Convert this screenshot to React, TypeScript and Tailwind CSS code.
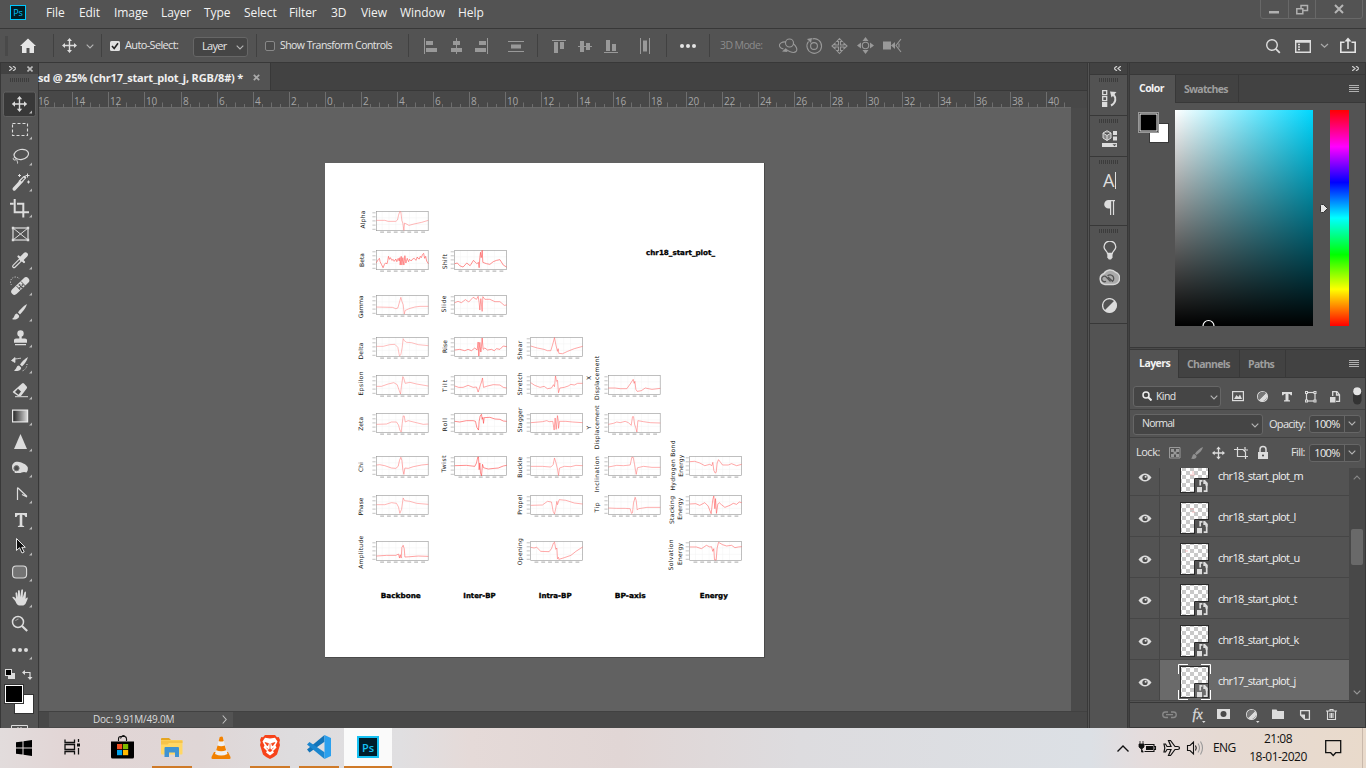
import React from "react";

/* ---------- plots on the document ---------- */

type Plot = { x: number; y: number; d: string; c?: string; w?: number };

const PLOTS: Plot[] = [
  { x: 376, y: 211.3, c: "#ff7d7d", d: "0,27 25,27 35,30 58,30 63,26 66,12 70,0 73,2 76,28 79,35 82,57 84,35 88,37 97,42 112,38 135,33 155,27" },
  { x: 376, y: 250.3, c: "#ff5050", w: 0.6, d: "0,37 3,32 6,27 9,24 11,34 15,42 20,52 24,42 27,38 32,40 34,30 36,18 39,27 42,22 46,30 50,27 53,33 58,26 61,34 65,24 68,32 70,22 71,44 74,18 76,44 79,22 82,44 85,16 88,38 92,24 96,34 99,27 104,32 108,26 113,24 118,30 122,20 124,24 128,26 131,18 134,22 138,12 141,9 144,24 147,18 150,32 155,40" },
  { x: 376, y: 295.3, c: "#ff7d7d", d: "0,35 48,36 58,40 64,38 69,20 73,6 76,18 80,28 83,56 86,45 100,39 115,35 130,33 155,33" },
  { x: 376, y: 337.3, c: "#ff8a8a", d: "0,27 20,27 40,22 55,21 64,30 69,56 73,52 77,30 80,4 83,10 90,15 105,16 125,22 155,25" },
  { x: 376, y: 375.3, c: "#ff7d7d", d: "0,33 15,33 35,26 52,22 62,28 68,45 72,56 75,30 79,4 82,10 86,24 100,21 120,26 155,32" },
  { x: 376, y: 413.3, c: "#ff7d7d", d: "0,33 30,32 45,26 60,26 66,35 70,50 74,56 77,30 80,8 83,8 86,26 95,22 115,27 140,33 155,32" },
  { x: 376, y: 456.3, c: "#ff6d6d", d: "0,26 10,25 25,28 45,35 58,36 65,30 69,12 73,3 76,12 79,40 82,54 85,35 95,36 110,31 135,26 155,24" },
  { x: 376, y: 495.3, c: "#ff7d7d", d: "0,28 25,28 45,22 60,24 66,35 70,54 75,42 80,8 84,16 100,18 120,24 155,27" },
  { x: 376, y: 541.3, c: "#ff5a5a", d: "0,44 30,42 58,42 66,38 69,50 71,40 74,50 76,18 80,12 83,22 85,47 100,46 125,44 155,45" },
  { x: 454.3, y: 250.3, c: "#f55", w: 0.65, d: "0,40 8,38 15,46 25,50 36,38 46,46 56,30 66,40 71,36 73,52 75,22 77,6 79,22 81,14 82,0 84,36 95,40 105,42 115,34 125,30 135,28 145,44 155,50" },
  { x: 454.3, y: 295.3, c: "#ff5a5a", d: "0,22 10,18 20,22 32,13 42,20 55,6 65,12 70,3 73,22 75,44 78,10 80,28 82,48 84,4 90,12 105,12 120,19 135,19 148,30 155,29" },
  { x: 454.3, y: 337.3, c: "#f44", d: "0,38 15,36 30,40 40,36 50,40 60,32 67,38 70,14 72,56 75,15 78,44 80,28 82,2 85,36 90,32 98,38 110,36 118,40 125,34 135,36 145,26 155,28" },
  { x: 454.3, y: 375.3, c: "#ff5a5a", d: "0,32 12,36 25,36 40,30 55,36 65,35 70,50 74,38 77,28 80,20 83,8 86,36 98,32 115,28 135,29 145,36 155,38" },
  { x: 454.3, y: 413.3, c: "#f44", w: 0.6, d: "0,24 15,26 35,22 55,22 62,24 66,42 71,50 73,24 76,8 80,3 82,18 84,12 86,30 88,13 105,12 120,17 135,18 145,23 155,24" },
  { x: 454.3, y: 456.3, c: "#f44", w: 0.6, d: "0,28 35,27 60,30 65,20 69,2 71,2 73,40 75,20 77,50 80,58 83,24 86,34 100,38 118,36 130,35 145,29 155,27" },
  { x: 530.3, y: 337.3, c: "#ff6060", d: "0,26 20,32 40,36 50,40 60,40 66,20 71,1 75,22 80,42 82,34 84,48 95,49 110,42 130,34 155,27" },
  { x: 530.3, y: 375.3, c: "#ff6060", d: "0,22 12,30 28,36 40,33 50,40 62,38 68,28 71,34 74,2 77,18 80,15 83,52 87,38 100,36 112,32 120,27 130,29 140,24 155,24" },
  { x: 530.3, y: 413.3, c: "#ff6060", d: "0,28 35,25 48,22 55,25 66,24 70,50 73,14 76,48 80,7 82,20 83,45 86,24 105,24 125,26 155,28" },
  { x: 530.3, y: 456.3, c: "#ff7070", d: "0,30 35,30 60,32 67,25 71,5 75,18 80,38 83,57 86,35 100,30 120,31 135,27 155,28" },
  { x: 530.3, y: 495.3, c: "#ff7070", d: "0,30 35,29 50,18 62,20 67,48 71,56 75,38 78,18 80,28 85,13 105,15 130,23 155,26" },
  { x: 530.3, y: 541.3, c: "#ff6060", d: "0,18 10,20 18,18 30,30 55,31 62,22 68,5 71,2 75,24 78,20 80,52 83,48 84,54 100,49 120,42 135,30 155,17" },
  { x: 608, y: 375.3, c: "#ff6060", d: "0,38 20,38 35,40 55,40 65,26 74,12 77,24 79,18 82,42 86,48 98,46 110,38 130,42 155,39" },
  { x: 608, y: 413.3, c: "#ff7070", d: "0,33 15,30 25,26 35,28 50,24 60,28 68,36 72,10 75,10 78,32 82,44 85,56 88,22 105,25 125,28 155,29" },
  { x: 608, y: 456.3, c: "#ff7070", d: "0,32 25,27 45,28 65,26 70,3 74,3 78,24 83,54 87,34 105,30 130,33 155,33" },
  { x: 608, y: 495.3, c: "#ff7070", d: "0,38 25,39 50,39 65,40 69,54 72,52 75,22 80,6 83,16 86,44 90,40 115,36 155,36" },
  { x: 689.3, y: 456.3, c: "#ff6060", d: "0,16 15,15 30,20 45,28 60,24 66,28 69,18 72,42 76,50 79,48 82,20 86,10 92,18 98,26 115,26 125,22 140,28 155,24" },
  { x: 689.3, y: 495.3, c: "#f55", d: "0,26 18,25 30,30 45,22 55,32 64,55 69,12 72,2 75,40 77,10 80,54 84,26 88,22 95,28 105,36 120,30 130,24 140,27 148,20 155,22" },
  { x: 689.3, y: 541.3, c: "#ff5a5a", d: "0,17 20,17 35,22 50,12 60,17 65,16 69,30 72,22 74,55 79,56 82,20 86,3 98,10 110,14 125,12 135,19 145,17 155,16" },
];

type Lab = [string, number, number, number];
const LABELS: Lab[] = [
  ["Alpha", 363, 219.5, 18], ["Beta", 361.7, 260, 14], ["Gamma", 361, 306.8, 23],
  ["Delta", 360.7, 351, 17], ["Epsilon", 361, 383.5, 24], ["Zeta", 361, 423.8, 14],
  ["Chi", 361, 467, 10], ["Phase", 361, 506.5, 18], ["Amplitude", 361, 552.3, 33],
  ["Shift", 444.6, 261.7, 15], ["Slide", 444.2, 304, 17], ["Rise", 444.6, 346.5, 13],
  ["Tilt", 444.6, 386, 12], ["Roll", 444.6, 424.7, 13], ["Twist", 444, 464, 17],
  ["Shear", 519.8, 350.3, 19], ["Stretch", 519.8, 384, 23], ["Stagger", 519.8, 420, 25],
  ["Buckle", 519.8, 467.3, 21], ["Propel", 519.8, 504.7, 20], ["Opening", 519.8, 551.7, 27],
  ["X", 588.7, 378, 4], ["Displacement", 596.7, 378, 44], ["Y", 588.7, 427.7, 4],
  ["Displacement", 596.7, 427.3, 44], ["Inclination", 596.7, 474.3, 36], ["Tip", 596.7, 507.5, 10],
  ["Hydrogen Bond", 672.5, 465.5, 50], ["Energy", 681, 465.7, 22],
  ["Stacking", 672, 510, 28], ["Energy", 679.5, 508.7, 22],
  ["Solvation", 670.7, 555, 31], ["Energy", 679.5, 554, 22],
];

const HEADS: Lab[] = [
  ["Backbone", 380.8, 598.3, 40], ["Inter-BP", 463.3, 598.3, 32.3], ["Intra-BP", 538.8, 598.3, 32.8],
  ["BP-axis", 614.8, 598.3, 31], ["Energy", 699.8, 598.3, 28], ["chr18_start_plot_", 646, 255.3, 69],
];

function Artboard() {
  return (
    <svg className="block h-[494px] w-[439px] bg-white" viewBox="325 163 439 494">
      {PLOTS.map((p, i) => (
        <g key={i} transform={`translate(${p.x + 0.4} ${p.y})`}>
          {[1, 2, 3, 4, 5, 6].map((n) => (
            <g key={n}>
              <path d={`M${n * 6.8 - 1} 0V19.4`} stroke="#f3f3f3" strokeWidth=".5" />
              <path d={`M${n * 6.8 - 3} 20.8h3.800`} stroke="#8c8c8c" strokeWidth=".75" />
            </g>
          ))}
          <path d="M44.800 20.800h3.800" stroke="#8c8c8c" strokeWidth=".75" />
          <path d="M0 6.500H52M0 13H52" stroke="#f3f3f3" strokeWidth=".5" />
          {[1.5, 5.5, 9.6, 13.8, 18].map((n) => (
            <path key={n} d={`M-4 ${n}h3.200`} stroke="#9a9a9a" strokeWidth=".6" />
          ))}
          <rect width="51.800" height="19.400" fill="none" stroke="#959595" strokeWidth=".6" />
          <polyline points={p.d} transform="scale(.335)" fill="none" stroke={p.c} strokeWidth={(p.w ?? 0.55) * 3} strokeLinejoin="round" />
        </g>
      ))}
      <g fontFamily="'DejaVu Sans', sans-serif" fontSize="6" fill="#111">
        {LABELS.map(([t, x, y, l], i) => (
          <text key={i} transform={`translate(${x + 2.1} ${y}) rotate(-90)`} textAnchor="middle" textLength={l}>{t}</text>
        ))}
      </g>
      <g fontFamily="'DejaVu Sans', sans-serif" fontWeight="700" fontSize="7" fill="#000" stroke="#000" strokeWidth=".3">
        {HEADS.map(([t, x, y, l], i) => (
          <text key={i} x={x} y={y} textLength={l} lengthAdjust="spacingAndGlyphs">{t}</text>
        ))}
      </g>
    </svg>
  );
}

/* ---------- shared bits ---------- */

function Svg({ w, h, className = "", children, vb }: { w: number; h: number; className?: string; children: React.ReactNode; vb?: string }) {
  return (
    <svg width={w} height={h} viewBox={vb ?? `0 0 ${w} ${h}`} className={`block shrink-0 ${className}`} fill="none">
      {children}
    </svg>
  );
}

function Grip() {
  return (
    <Svg w={20} h={4}>
      <path d="M.5 0v4M2.500 0v4M4.500 0v4M6.500 0v4M8.500 0v4M10.500 0v4M12.500 0v4M14.500 0v4M16.500 0v4M18.500 0v4" stroke="#3c3c3c" />
    </Svg>
  );
}

function Chev({ className = "" }: { className?: string }) {
  return (
    <Svg w={8} h={5} className={className}>
      <path d="M.7.7 4 4 7.300.7" stroke="#b5b5b5" strokeWidth="1.100" />
    </Svg>
  );
}

function MoveShape() {
  return (
    <g>
      <path d="M7.500 2v11M2 7.500h11" stroke="#dcdcdc" strokeWidth="1.400" />
      <path d="M7.500 0 10 3H5zM7.500 15 5 12h5zM0 7.500 3 5v5zM15 7.500 12 10V5z" fill="#dcdcdc" />
    </g>
  );
}

/* ---------- top bars ---------- */

function MenuBar() {
  return (
    <div className="flex h-[29px] shrink-0 border-b border-[#383838] bg-[#535353]">
      <div className="ml-[10px] mt-[5px] flex h-[15px] w-4 items-center justify-center border border-[#00c8ff] bg-[#001d26] text-[9px] leading-none text-[#00c8ff]">Ps</div>
      <div className="ml-5 flex h-[26px] flex-1 items-center text-[12px] tracking-[-0.08px] text-[#f2f2f2]">
        <span className="w-[33px]">File</span>
        <span className="w-[35px]">Edit</span>
        <span className="w-[47px]">Image</span>
        <span className="w-[43px]">Layer</span>
        <span className="w-[40px]">Type</span>
        <span className="w-[45px]">Select</span>
        <span className="w-[42px]">Filter</span>
        <span className="w-[30px]">3D</span>
        <span className="w-[39px]">View</span>
        <span className="w-[58px]">Window</span>
        <span>Help</span>
      </div>
      <Svg w={103} h={20} className="mr-[3px]">
        <path d="M.5 0v16q0 2.500 2.500 2.500h97q2.500 0 2.500-2.500V0M28.500 0v18.500M55.500 0v18.500" stroke="#686868" />
        <path d="M9 11h10v2.500H9z" fill="#b0b0b0" />
        <path d="M41 9.500v-4h6.500v5h-4M36.800 8.800h6v5h-6z" stroke="#b0b0b0" strokeWidth="1.500" />
        <path d="m75 5 8 8M83 5l-8 8" stroke="#b5b5b5" strokeWidth="2" />
      </Svg>
    </div>
  );
}

function Sep({ className }: { className: string }) {
  return <div className={`h-[23px] w-px shrink-0 bg-[#414141] ${className}`} />;
}

function OptionsBar() {
  const g = "#999";
  return (
    <div className="flex h-[34px] shrink-0 items-center border-b border-[#383838] bg-[#535353] text-[11px] text-[#e4e4e4]">
      <Svg w={3} h={20} className="ml-[5px]">
        <path d="M0 1h3M0 3h3M0 5h3M0 7h3M0 9h3M0 11h3M0 13h3M0 15h3M0 17h3M0 19h3" stroke="#404040" />
      </Svg>
      <Svg w={16} h={15} className="ml-3">
        <path d="M8 .5 16 8h-2v7h-4.500v-5h-3v5H2V8H0z" fill="#e6e6e6" />
      </Svg>
      <Sep className="ml-[17px]" />
      <Svg w={15} h={15} className="ml-2"><MoveShape /></Svg>
      <Chev className="ml-[9px] mt-[2px]" />
      <Sep className="ml-[7px]" />
      <Svg w={10} h={10} className="ml-2">
        <rect width="10" height="10" rx="1.500" fill="#e0e0e0" />
        <path d="m2 5 2.200 2.500L8 2.300" stroke="#222" strokeWidth="1.600" />
      </Svg>
      <span className="ml-[5px] w-[68px] whitespace-nowrap tracking-[-0.65px]">Auto-Select:</span>
      <div className="mt-[2px] flex h-[20px] w-[55px] items-center justify-between rounded-[3px] border border-[#666] bg-[#454545] pl-2 pr-[3px] tracking-[-0.7px]">
        Layer<Chev className="mt-[2px]" />
      </div>
      <Sep className="ml-2" />
      <Svg w={10} h={10} className="ml-2">
        <rect x=".5" y=".5" width="9" height="9" rx="1.500" stroke="#888" fill="#4b4b4b" />
      </Svg>
      <span className="ml-[5px] w-[128px] whitespace-nowrap text-[10.5px] tracking-[-0.55px]">Show Transform Controls</span>
      <Svg w={260} h={23} vb="408 34 260 23">
        <path d="M408.500 34v23M537.500 34v23M666.500 34v23" stroke="#414141" />
        <g fill={g}>
          <path d="M424 38h1v16h-1zM426 41h7v4h-7zM426 48h11v4h-11zM456 38h1v16h-1zM453 41h7v4h-7zM451 48h11v4h-11zM487 38h1v16h-1zM479 41h7v4h-7zM475 48h11v4h-11z" />
          <path d="M508 41h16v1h-16zM511 44.500h10v4h-10zM508 51h16v1h-16z" />
          <path d="M552 40h14v1h-14zM554 42h4v11h-4zM560 42h4v7h-4zM578 46h14v1h-14zM580 41h4v11h-4zM586 43h4v7h-4zM604 52h14v1h-14zM606 40h4v11h-4zM612 44h4v7h-4z" />
          <path d="M640 38h1v16h-1zM643 40.500h4v11h-4zM649 38h1v16h-1z" />
        </g>
      </Svg>
      <Svg w={16} h={4} className="ml-3">
        <circle cx="2" cy="2" r="2" fill="#e4e4e4" /><circle cx="8" cy="2" r="2" fill="#e4e4e4" /><circle cx="14" cy="2" r="2" fill="#e4e4e4" />
      </Svg>
      <Sep className="ml-[13px]" />
      <span className="ml-[10px] w-[59px] whitespace-nowrap text-[10.5px] tracking-[-0.6px] text-[#8c8c8c]">3D Mode:</span>
      <Svg w={124} h={18} vb="779 37 124 18">
        <g stroke="#999" strokeWidth="1.100">
          <circle cx="789.500" cy="43" r="4" />
          <path d="M786 42c-4-.5-7 1.500-6.500 4 .3 1.500 2 2.500 4 3M793 43.500c3 2 5 6 3 8s-6 .5-10-2" />
          <circle cx="814" cy="46" r="3.400" />
          <path d="M808.500 41.500a7.300 7.300 0 1 0 4-2.600" />
          <path d="m839.500 38.500 2.700 3h-1.700v3.500h3.500v-1.700l3 2.700-3 2.700v-1.700h-3.500v3.500h1.700l-2.700 3-2.700-3h1.700v-3.500h-3.500v1.700l-3-2.700 3-2.700v1.700h3.500v-3.500h-1.700z" />
          <circle cx="865.500" cy="45.500" r="3.200" />
          <path d="m901 39-5 6.500 5 6.500M899 43.500v4" />
        </g>
        <g fill="#999">
          <path d="m782 51.500 4-3.500 1.500 4zM807 39l5-1-1 5z" />
          <path d="m865.500 37 3 4h-6zM865.500 54l-3-4h6zM857 45.500l4-3v6zM874 45.500l-4 3v-6zM883 41.500h8v8h-8zM891 45.500l4-3.500v7z" />
        </g>
      </Svg>
      <div className="flex-1" />
      <Svg w={101} h={18} vb="1265 37 101 18">
        <circle cx="1272" cy="45" r="5.300" stroke="#ddd" strokeWidth="1.400" />
        <path d="m1275.800 48.800 4 4" stroke="#ddd" strokeWidth="1.800" />
        <path d="M1295.700 40.700h14.600v11.600h-14.600zM1295 42h16" stroke="#ddd" strokeWidth="1.400" />
        <path d="M1298 44.500h2M1298 47h2M1298 49.500h2" stroke="#ddd" strokeWidth="1.400" />
        <path d="m1321 44 3.500 3.300L1328 44" stroke="#aaa" strokeWidth="1.200" />
        <path d="M1344.500 42.200h-3.700v10h14.400v-10h-3.700M1348 49V40" stroke="#e4e4e4" strokeWidth="1.600" />
        <path d="m1348 37.500 3.500 4h-7z" fill="#e4e4e4" />
      </Svg>
    </div>
  );
}

/* ---------- tool column ---------- */

const W = "#dcdcdc";
const TOOLS: { d: React.ReactNode; t?: boolean }[] = [
  { t: true, d: <><path d="M19.500-6v12M13.500 0h12" stroke={W} strokeWidth="1.400" /><path d="m19.500-8 2.700 3.200h-5.400zM19.500 8l-2.700-3.200h5.400zM11.800 0l3.200-2.700v5.400zM27.200 0 24 2.700v-5.400z" fill={W} /></> },
  { t: true, d: <rect x="12.500" y="-6.500" width="15" height="12" stroke={W} strokeDasharray="3 2" strokeWidth="1.100" /> },
  { t: true, d: <><ellipse cx="21.300" cy="-1.500" rx="7.300" ry="5" stroke={W} strokeWidth="1.200" transform="rotate(-10 21 -1.500)" /><path d="M14.500 1.500c-2 .5-1.500 3 .5 2.500s2-2.500 0-2.200M17 3.500c-.5 1.500 1 2 .5 4" stroke={W} /></> },
  { t: true, d: <><path d="m14.200 7 7.800-8.500" stroke={W} strokeWidth="3.400" strokeLinecap="round" /><path d="m20.500-.5 4-4" stroke={W} strokeWidth="3.400" strokeLinecap="round" /><path d="m21-.8 3.200-3.300" stroke="#535353" strokeWidth="1.200" /><path d="M19.500-8v3M18-6.500h3M27.500-8.500v4M25.500-6.500h4M28.500-1.500v3M27 0h3" stroke={W} /></> },
  { t: true, d: <path d="M14.700-9V4.200H25M10-4.300h3.500M17-4.300h6.300V9.500M25 4.200h4" stroke={W} strokeWidth="2" /> },
  { d: <><rect x="13" y="-6" width="15" height="12" stroke={W} strokeWidth="1.200" /><path d="m13-6 15 12M28-6 13 6" stroke={W} strokeWidth="1" /><path d="M11.800-7.200h2.400v2.400h-2.400zM26.800-7.200h2.400v2.400h-2.400zM11.800 4.800h2.400v2.400h-2.400zM26.800 4.800h2.400v2.400h-2.400z" fill={W} /></> },
  { t: true, d: <><path d="m14 6.300 7-7" stroke={W} strokeWidth="3.800" strokeLinecap="round" /><path d="m14 6.300 7.200-7.200" stroke="#535353" strokeWidth="1.500" strokeLinecap="round" /><path d="m18.500-3.500 5.500 5.500" stroke={W} strokeWidth="2.200" strokeLinecap="round" /><path d="m21.500-1.200 4-4" stroke={W} strokeWidth="4.800" strokeLinecap="round" /></> },
  { t: true, d: <><path d="m14.500 5.500 11.500-11" stroke={W} strokeWidth="6.500" strokeLinecap="round" /><path d="m16.500 0 4.500 4.800M21-4.500l4.500 4.700" stroke="#535353" strokeWidth="1" /><path d="M19.500-1h.1M22.500-1h.1M19.500 2h.1M22 1.500h.1M20.800.4h.1" stroke="#444" strokeWidth="1.500" strokeLinecap="square" /><path d="M11.500-1a5 5 0 0 1 8-6" stroke={W} strokeDasharray="1 1.500" /></> },
  { t: true, d: <><path d="M27-8c-3 1.500-7 5.500-9 8.500l2 2C22.500 0 26-4 27-8z" fill={W} /><path d="M17 1.500c-3 0-2 4-5 5.500 3 1.500 8-.5 7-3.500z" fill={W} /></> },
  { t: true, d: <><circle cx="20.500" cy="-4.500" r="3.200" fill={W} /><path d="M19.300-3h2.400v5h-2.400zM14 2q0-1.500 2-1.500h9q2 0 2 1.500v2.700H14zM15 6h11v1.200H15z" fill={W} /></> },
  { t: true, d: <><path d="M28-7c-3 1.500-6 4.500-8 7.500l2 2c2.500-2.500 5-5.500 6-9.500z" fill={W} /><path d="M19 1.500c-3 0-2 3.500-5 5 3 1.500 8-.5 7-3z" fill={W} /><path d="m11.500-3.500 3.500-3v5zM14-5c3 0 4-.5 7-.8" fill={W} stroke={W} strokeWidth=".8" /><path d="M27 0c0 3-1.500 6-5 7" stroke={W} strokeDasharray="1 1.500" /></> },
  { t: true, d: <><path d="m18 6-5-3.500q-.5-.5 0-1L22-6.500q1-.8 2 0l2.700 3q.8 1 0 2L21 6z" fill={W} /><path d="m15 2 3-3.200 3 2.800L18.500 4.700z" fill="#4d4d4d" /><path d="M15 6.700h13" stroke={W} /></> },
  { t: true, d: <><defs><linearGradient id="tg"><stop offset="0" stopColor="#222" /><stop offset="1" stopColor="#ddd" /></linearGradient></defs><rect x="12.600" y="-5.900" width="15" height="11.800" fill="url(#tg)" stroke="#e8e8e8" strokeWidth="1.200" /></> },
  { t: true, d: <path d="m20.500-8 6.500 15H14z" fill={W} /> },
  { t: true, d: <><path d="M12-1c0-4 3.500-6 7-5 4 .8 8 3 8.800 5.500.3 2-.3 4-1.300 5C23 3 22 5 19 5h-4q-1-.5 0-1.300C13 3.500 12 1.500 12-1z" fill={W} /><circle cx="16.500" cy=".2" r="2.600" fill="#4c4c4c" stroke="#777" /></> },
  { t: true, d: <path d="M17.500 6V-5.500q0-1 .8-.3L27 2.500M27 3l-5-2.500" stroke={W} strokeWidth="1.200" /> },
  { t: true, d: <path d="M15-7h12v4h-1.500Q25-5.300 22.300-5.300V5.500q2 0 2 1.500h-6.600q0-1.500 2-1.500V-5.300Q17-5.300 16.500-3H15z" fill={W} /> },
  { t: true, d: <path d="M16.500-7.500v12l3-2.800L22 7l2.200-1-2.400-4.700h3.500z" fill="#111" stroke="#e6e6e6" strokeWidth="1" /> },
  { t: true, d: <rect x="12.600" y="-6" width="14" height="12" rx="3.500" fill="#747474" stroke={W} strokeWidth="1.100" /> },
  { t: true, d: <path d="M15.500 3.500c-1-2-2.500-3-3.200-4.300.8-1 2-.5 3.700 1.600L15.500-5q.8-1.500 1.700 0L18-.5V-7q1-1.800 1.800 0l.4 6.300L21.300-8q1-1.300 1.700 0L22.700-.3 24.600-6q1.200-1 1.400.5L25.600 1q1-2 2-1.500c.6.800-.6 3-1.600 5.200Q25 7.500 22 7.500h-2.500q-2.500 0-4-4z" fill={W} /> },
  { d: <><circle cx="18" cy="-2" r="5.500" stroke={W} strokeWidth="1.500" /><path d="m22 2 5.200 5" stroke={W} strokeWidth="2.200" /><path d="M15.500-3q1-2 3-2" stroke="#aaa" /></> },
  { t: true, d: <><circle cx="14" cy="0" r="2" fill={W} /><circle cx="20" cy="0" r="2" fill={W} /><circle cx="26" cy="0" r="2" fill={W} /></> },
];

function ToolColumn() {
  return (
    <div className="flex h-full w-[39px] shrink-0 flex-col overflow-hidden border-x border-[#383838] bg-[#535353]">
      <div className="flex h-[11px] w-full shrink-0 items-center bg-[#424242]">
        <Svg w={7} h={5} className="ml-2"><path d="m0 0 3 2.500L0 5M4 0l3 2.500L4 5" stroke="#ccc" strokeWidth="1.300" /></Svg>
        <Svg w={6} h={6} className="ml-[11px]"><path d="m.5.5 5 5M5.500.5l-5 5" stroke="#bbb" strokeWidth="1.600" /></Svg>
      </div>
      <div className="ml-[9px] mt-1 h-[13px] shrink-0"><Grip /></div>
      <div className="flex shrink-0 flex-col">
        {TOOLS.map((t, i) => (
          <svg key={i} className="block h-[26px] w-[37px]" viewBox="1 -13 37 26" fill="none">
            {i === 0 && <rect x="3.500" y="-12" width="32" height="24.500" rx="2" fill="#383838" stroke="#606060" />}
            {t.d}
            {t.t && <path d="M32 6.500V9.500h-3z" fill="#b8b8b8" />}
          </svg>
        ))}
      </div>
      <svg className="block h-[66px] w-[37px] shrink-0" viewBox="1 663 37 66" fill="none">
        <path d="M8 673h7v6H8z" fill="#dcdcdc" />
        <rect x="5.500" y="669.500" width="6" height="6" fill="#000" stroke="#dcdcdc" />
        <path d="M24 672.500h6v5" stroke="#dcdcdc" strokeWidth="1.200" />
        <path d="m22 672.500 3-2.500v5zM30 680l-2.500-3h5z" fill="#dcdcdc" />
        <rect x="14.500" y="694.500" width="19" height="19" fill="#fff" stroke="#333" />
        <rect x="4.500" y="684.500" width="19" height="19" fill="#000" stroke="#333" />
        <rect x="5.500" y="685.500" width="17" height="17" fill="#000" stroke="#fff" />
        <path d="M11.500 730v-4.500h16v4.500M18 729v-2M21 729v-2" stroke="#dcdcdc" />
      </svg>
    </div>
  );
}

/* ---------- document ---------- */

const STEP = 36.07;
const RULER = Array.from({ length: 29 }, (_, i) => i - 8);

function Ruler() {
  return (
    <svg className="block h-[17px] w-[1032px] shrink-0 bg-[#484848]" viewBox="39 91 1032 17">
      <path d="M39 107.500h1032" stroke="#6a6a6a" />
      {RULER.map((n) => {
        const x = Math.round(325.8 + n * STEP) + 0.5;
        return (
          <g key={n}>
            <path d={`M${x - 1} 92v16M${x + 8} 104v4M${x + 17} 102.500v5.500M${x + 26} 104v4`} stroke="#6e6e6e" />
            <text x={x + 0.5} y="104.600" fontSize="10" fill="#a5a5a5" letterSpacing="-.2">{Math.abs(n * 2)}</text>
          </g>
        );
      })}
    </svg>
  );
}

function DocumentArea() {
  return (
    <div className="flex h-full w-[1049px] shrink-0 flex-col border-r border-[#383838] bg-[#484848]">
      <div className="flex h-[28px] shrink-0 border-b border-[#383838] bg-[#424242]">
        <div className="flex h-full w-[232px] items-center border-r border-[#383838] bg-[#535353] text-[11px] font-bold tracking-[-0.18px] text-[#efefef]">
          <span className="-ml-px w-[215px] whitespace-nowrap pt-[4px]">sd @ 25% (chr17_start_plot_j, RGB/8#) *</span>
          <Svg w={7} h={7} className="mt-px"><path d="m.8.8 5.400 5.400M6.200.8.8 6.200" stroke="#aaa" strokeWidth="1.700" /></Svg>
        </div>
      </div>
      <Ruler />
      <div className="flex min-h-0 flex-1">
        <div className="h-full w-[1032px] border-l border-[#5a5a5a] bg-[#616161] pl-[285px] pt-[55px]">
          <div className="h-[495px] w-[440px] bg-[#4a4a4a]"><Artboard /></div>
        </div>
        <div className="h-full flex-1 bg-[#4a4a4a]" />
      </div>
      <div className="flex h-[17px] shrink-0 border-t border-[#414141]">
        <div className="ml-[10px] flex h-[15px] w-[184px] items-center bg-[#535353] pl-11 text-[10px] text-[#dcdcdc]">
          <span className="w-[129px] whitespace-nowrap tracking-[-0.2px]">Doc: 9.91M/49.0M</span>
          <Svg w={5} h={9}><path d="m.7.5 3.500 4-3.500 4" stroke="#c0c0c0" strokeWidth="1.100" /></Svg>
        </div>
      </div>
    </div>
  );
}

/* ---------- right side ---------- */

function IconStrip() {
  return (
    <div className="flex h-full w-[38px] shrink-0 flex-col border-r border-[#383838] bg-[#535353]">
      <div className="flex h-[12px] w-full shrink-0 items-center justify-end border-b border-[#383838] bg-[#424242] pr-[6px]">
        <Svg w={7} h={5}><path d="M3 0 0 2.500 3 5M7 0 4 2.500 7 5" stroke="#ccc" strokeWidth="1.300" /></Svg>
      </div>
      <div className="h-[41px] shrink-0 border-b border-[#383838] pl-[9px] pt-[3px]"><Grip />
        <Svg w={16} h={18} className="ml-[3px] mt-[8px]">
          <path d="M.7.700h4v4h-4zM.7 6.700h4v4h-4z" stroke={W} strokeWidth="1.300" /><path d="M0 12h5.300v5H0z" fill={W} />
          <path d="M9 15.500c5-2.500 5.500-7.500 2.500-11" stroke={W} strokeWidth="2" /><path d="M8 1.500 14.500 2 9.500 7.500z" fill={W} />
        </Svg>
      </div>
      <div className="h-[41px] shrink-0 border-b border-[#383838] pl-[9px] pt-[3px]"><Grip />
        <Svg w={16} h={18} className="ml-[3px] mt-[7px]">
          <path d="M5 .7 9 3v5L5 10.500 1 8V3zM1 3l4 2.500L9 3M5 5.500v5" fill="#888" stroke={W} strokeWidth="1" />
          <path d="M11 1h4v4h-4zM11 6.500h4v4h-4zM0 13h15v4H0z" fill={W} /><path d="M10.500 14.300h4l-2 2z" fill="#535353" />
        </Svg>
      </div>
      <div className="h-[69px] shrink-0 border-b border-[#383838] pl-[9px] pt-[3px]"><Grip />
        <div className="ml-1 mt-[5px] flex h-[22px] items-center text-[18px] leading-none text-[#dedede]">A<span className="ml-px h-[17px] w-px bg-[#dedede]" /></div>
        <Svg w={13} h={15} className="ml-[4px] mt-[9px]">
          <path d="M12 0H5.500a4.300 4.300 0 0 0 0 8.600H7V15h1.200V1.300h1.700V15h1.200V1.300H12z" fill={W} />
        </Svg>
      </div>
      <div className="h-[98px] shrink-0 border-b border-[#383838] pl-[9px] pt-[3px]"><Grip />
        <Svg w={14} h={19} className="ml-[4px] mt-[8px]">
          <path d="M4.500 12.500c0-2-3.500-3.500-3.500-6.500a5.900 5.900 0 0 1 11.800 0c0 3-3.500 4.500-3.500 6.500z" stroke={W} strokeWidth="1.300" /><path d="M4.300 13h5.200v3.500L8 18.500H5.800L4.300 16.500z" fill={W} />
        </Svg>
        <Svg w={22} h={17} className="-ml-px mt-[9px]">
          <path d="M7 15.500a5.700 5.700 0 0 1-1-11A7.300 7.300 0 0 1 17.500 3.300 6.300 6.300 0 0 1 15 15.500z" fill="#aaa" stroke="#d6d6d6" strokeWidth="1.500" />
          <path d="M12.500 12.500 7.500 7.300a2.800 2.800 0 1 0 .5 5M10 8l4.500 4.300a3.600 3.600 0 1 0-5-5.500" stroke="#535353" strokeWidth="1.300" />
        </Svg>
        <Svg w={16} h={16} className="ml-[3px] mt-[12px]">
          <circle cx="7.500" cy="7.500" r="6.900" stroke={W} strokeWidth="1.300" /><path d="M12.500 2.500a7 7 0 0 1-10 10z" fill={W} />
        </Svg>
      </div>
    </div>
  );
}

function Burger() {
  return <Svg w={10} h={8}><path d="M0 .5h10M0 2.500h10M0 4.500h10M0 6.500h10" stroke="#b0b0b0" /></Svg>;
}

function TabRow({ items }: { items: [string, string][] }) {
  return (
    <div className="flex h-[28px] shrink-0 bg-[#424242] text-[10.5px] font-bold">
      {items.map(([t, c], i) => (
        <div key={t} className={`flex items-center whitespace-nowrap ${c} ${i === 0 ? "bg-[#535353] pl-[9px] tracking-[-0.55px] text-[#f2f2f2]" : "border-b border-r border-[#383838] pl-2 pt-[2px] tracking-[-0.7px] text-[#9e9e9e]"} ${i === 1 ? "border-l" : ""}`}>{t}</div>
      ))}
      <div className="flex flex-1 items-center justify-end border-b border-[#383838] pr-[6px]"><Burger /></div>
    </div>
  );
}

function ColorPanel() {
  return (
    <div className="flex h-[273px] shrink-0 flex-col border-b border-[#383838] bg-[#535353]">
      <TabRow items={[["Color", "w-[45px]"], ["Swatches", "w-[64px]"]]} />
      <div className="flex pt-[7px]">
        <Svg w={31} h={32} className="ml-[8px] mt-[2px]">
          <rect x="11.500" y="11.500" width="19" height="19" fill="#fff" stroke="#383838" />
          <rect x=".5" y=".5" width="20" height="20" fill="#111" stroke="#999" />
          <rect x="2" y="2" width="17" height="17" fill="#000" stroke="#fff" />
        </Svg>
        <div className="ml-[6px] h-[216px] w-[138px] bg-[linear-gradient(to_bottom,transparent,#000),linear-gradient(to_right,#fff,#00d8ff)]">
          <Svg w={138} h={216}><circle cx="33.500" cy="216" r="5.500" stroke="#fff" strokeWidth="1.200" /></Svg>
        </div>
        <Svg w={8} h={9} className="ml-[7px] mt-[94px]"><path d="M.5 1.500q0-1 1-1h2l4 4-4 4h-2q-1 0-1-1z" fill="#e6e6e6" stroke="#333" /></Svg>
        <div className="ml-[2px] h-[216px] w-[19px] bg-[linear-gradient(to_bottom,#f00,#f0f_17%,#00f_33.500%,#0ff_50%,#0f0_67%,#ff0_83%,#f00)]" />
      </div>
    </div>
  );
}

const LAYERS = ["chr18_start_plot_m", "chr18_start_plot_l", "chr18_start_plot_u", "chr18_start_plot_t", "chr18_start_plot_k", "chr17_start_plot_j"];

function Thumb({ sel, mark }: { sel: boolean; mark?: string }) {
  return (
    <Svg w={34} h={37} vb="-3 -3 34 37">
      <defs>
        <pattern id="chk" width="8" height="8" patternUnits="userSpaceOnUse" x="1" y="2">
          <rect width="8" height="8" fill="#fff" /><path d="M4 0h4v4H4zM0 4h4v4H0z" fill="#c9c9c9" />
        </pattern>
      </defs>
      <rect x="-.5" y=".5" width="28" height="31" fill="url(#chk)" stroke="#2a2a2a" />
      {mark && <path d={mark} stroke="#f3a5a5" strokeWidth=".7" />}
      <path d="M14 32.500V18h15v14.500z" fill={sel ? "#6a6a6a" : "#535353"} />
      <path d="M13.500 32V17.500h14.500" stroke="#2a2a2a" />
      {sel && <path d="M27.500 17.500V31.500h-14" stroke="#2a2a2a" />}
      <path d="M19.200 24.500v-4.700h2.300M25.700 24v6.200h-3" stroke={W} strokeWidth="1.700" />
      <path d="M22.300 19h1.700l2.800 3v2.500h-2.500v-1.500h-2z" fill={W} />
      <path d="M16 26h5v5.200h-5z" fill={W} />
      {sel && <path d="M-2.500 8v-9.500H7M20-1.500h9.500V8M-2.500 24v9.500H7M20 33.500h9.500V24" stroke="#fff" />}
    </Svg>
  );
}

function LayerRow({ name, sel, mark }: { name: string; sel: boolean; mark?: string }) {
  return (
    <div className="flex h-[41px] shrink-0 border-b border-[#464646]">
      <div className="flex w-[30px] items-center border-r border-[#464646] pl-[8px] pt-[4px]">
        <Svg w={14} h={9}>
          <path d="M.5 4.500Q3.500.5 7 .5t6.500 4Q10.500 8.500 7 8.500T.5 4.500z" fill="#dcdcdc" /><circle cx="7" cy="4.500" r="2.600" fill="#4a4a4a" /><circle cx="7.600" cy="3.800" r="1" fill="#ddd" />
        </Svg>
      </div>
      <div className={`flex flex-1 items-center ${sel ? "bg-[#6a6a6a]" : ""}`}>
        <div className="ml-[18px] mt-[2px]"><Thumb sel={sel} mark={mark} /></div>
        <span className="ml-[6px] mt-[3px] whitespace-nowrap text-[11px] tracking-[-0.7px] text-[#f0f0f0]">{name}</span>
      </div>
    </div>
  );
}

function ValueBox({ v }: { v: string }) {
  return (
    <div className="flex h-[18px] w-[52px] shrink-0 items-center rounded-[3px] border border-[#666] bg-[#454545]">
      <span className="flex h-full w-[35px] items-center justify-center border-r border-[#666] pt-px text-[11px] tracking-[-0.6px] text-[#eee]">{v}</span>
      <Chev className="ml-[3px]" />
    </div>
  );
}

function LayersPanel() {
  return (
    <div className="flex min-h-0 flex-1 flex-col border-t border-[#383838] bg-[#535353] text-[11px] text-[#e4e4e4]">
      <TabRow items={[["Layers", "w-[48px]"], ["Channels", "w-[62px]"], ["Paths", "w-[46px]"]]} />
      <div className="flex h-[32px] shrink-0 items-center border-b border-[#414141] pl-[3px]">
        <div className="mt-[5px] flex h-[21px] w-[88px] items-center rounded-[3px] border border-[#666] bg-[#454545] pl-2">
          <Svg w={10} h={10}><circle cx="4" cy="4" r="3" stroke="#eee" strokeWidth="1.500" /><path d="m6 6 3.500 3.500" stroke="#eee" strokeWidth="2" /></Svg>
          <span className="ml-[4px] w-[54px] pt-px text-[10.5px] tracking-[-0.6px]">Kind</span><Chev className="mt-[2px]" />
        </div>
        <Svg w={132} h={20} className="ml-[10px] mt-[4px]" vb="1231 386 132 20">
          <rect x="1232.600" y="391.600" width="10.800" height="9" stroke={W} strokeWidth="1.200" /><path d="m1234 399 2.500-4 1.800 2 1.700-2.500 2 4.500z" fill={W} />
          <circle cx="1262.500" cy="396.500" r="5" stroke={W} strokeWidth="1.100" /><path d="M1266 393a5 5 0 0 1-7 7z" fill={W} /><path d="M1266 393a5 5 0 0 0-7 7z" fill="#777" />
          <path d="M1282 392h10v3.300h-1.300q-.2-1.500-2.200-1.500v6.500h1.500v1.200h-6v-1.200h1.500v-6.500q-2 0-2.200 1.500h-1.300z" fill={W} />
          <rect x="1306.500" y="392.500" width="8.500" height="8.500" stroke={W} strokeWidth="1.200" /><path d="M1305 391h3v3h-3zM1313.500 391h3v3h-3zM1305 399.500h3v3h-3zM1313.500 399.500h3v3h-3z" fill={W} /><path d="M1306 392h1v1h-1zM1314.500 392h1v1h-1zM1306 400.500h1v1h-1zM1314.500 400.500h1v1h-1z" fill="#535353" />
          <path d="M1332.700 396v-4.300h4.300l2.500 3v6.600h-3.500M1336.500 391.500v3.500h3.500" stroke={W} strokeWidth="1.300" /><path d="M1330 397h5.500v5.500h-5.500z" fill={W} />
          <rect x="1353" y="387" width="8.500" height="17.500" rx="4.200" fill="#333" /><circle cx="1357.200" cy="391.300" r="4" fill="#e4e4e4" />
        </Svg>
      </div>
      <div className="flex h-[28px] shrink-0 items-center border-b border-[#414141] pl-[3px]">
        <div className="mt-[1px] flex h-[21px] w-[130px] items-center justify-between rounded-[3px] border border-[#666] bg-[#454545] pl-2 pr-[3px] text-[10.5px] tracking-[-0.75px]">Normal<Chev className="mt-[2px]" /></div>
        <span className="ml-[6px] w-[40px] pt-px tracking-[-0.7px]">Opacity:</span>
        <ValueBox v="100%" />
      </div>
      <div className="flex h-[30px] shrink-0 items-center pb-px pl-[6px]">
        <span className="w-[33px] tracking-[-0.5px]">Lock:</span>
        <Svg w={102} h={16} vb="1169 444 102 16">
          <path d="M1169.500 446.500h10.500v10.500h-10.500z" stroke="#999" /><path d="M1171 448h3v3h-3zM1176 448h3v3h-3zM1173.500 450.500h3v3h-3zM1171 453h3v3h-3zM1176 453h3v3h-3z" fill="#999" />
          <path d="M1203 446c-3 1-6 4-8 6.500l1.500 1.500c3-2 6-5 6.500-8zM1194.500 453c-2.500 0-1.500 3-3.500 4.500 2.500 1 6 0 5.500-2.500z" fill="#909090" />
          <path d="M1218.500 447v10M1213.500 452h10" stroke={W} strokeWidth="1.300" /><path d="m1218.500 445.500 2.300 2.700h-4.600zM1218.500 458.500l-2.300-2.700h4.600zM1212 452l2.700-2.300v4.600zM1225 452l-2.700 2.300v-4.600z" fill={W} />
          <path d="M1234 448.500h9l2.500 2.500v7M1237.500 446v9.500h10.500M1245 446v3h3" stroke={W} strokeWidth="1.200" />
          <path d="M1258 451h10v7h-10z" fill={W} /><path d="M1260 451v-2.500a3 3 0 0 1 6 0v2.500" stroke={W} strokeWidth="1.500" /><circle cx="1263" cy="454.500" r="1" fill="#444" />
        </Svg>
        <span className="ml-[20px] w-[18px] tracking-[-0.6px]">Fill:</span>
        <ValueBox v="100%" />
      </div>
      <div className="flex h-[234px] shrink-0 overflow-hidden">
        <div className="flex h-full w-[219px] flex-col justify-end overflow-hidden pb-px">
          {LAYERS.map((n, i) => (
            <LayerRow key={n} name={n} sel={i === 5} mark={["M9 14h5M12 10v3", "M9 7h4M11 10h3", "M4 8h3"][i]} />
          ))}
        </div>
        <div className="flex h-full w-[16px] flex-col items-center bg-[#484848]">
          <Svg w={8} h={5} className="mt-[7px]"><path d="M.7 4.300 4 1l3.300 3.300" stroke="#888" strokeWidth="1.100" /></Svg>
          <div className="mt-[49px] h-[36px] w-[12px] rounded-[2px] bg-[#696969]" />
          <Svg w={8} h={5} className="mt-[125px]"><path d="M.7.7 4 4 7.300.7" stroke="#999" strokeWidth="1.100" /></Svg>
        </div>
      </div>
      <div className="flex h-[26px] shrink-0 items-center border-y border-[#383838]">
        <Svg w={178} h={20} className="ml-[32px] mt-px" vb="1162 706 178 20">
          <path d="M1168 717.500h-2.500a2.700 2.700 0 0 1 0-5.500h2.500M1171 717.500h2.500a2.700 2.700 0 0 0 0-5.500h-2.500M1166 714.700h7" stroke="#8a8a8a" strokeWidth="1.300" />
          <text x="1192.500" y="718.500" fontSize="14" fontStyle="italic" fill={W} stroke={W} strokeWidth=".3" fontFamily="'Liberation Serif', serif">fx</text>
          <path d="M1202 721h3.500l-1.700 2zM1256 721h3.500l-1.700 2z" fill={W} />
          <path d="M1217 709h13v10h-13z" fill={W} /><circle cx="1223.500" cy="714" r="3" fill="#484848" />
          <circle cx="1251.500" cy="714.500" r="5" stroke={W} strokeWidth="1.100" /><path d="M1255 711a5 5 0 0 1-7 7z" fill={W} /><path d="M1255 711a5 5 0 0 0-7 7z" fill="#777" />
          <path d="M1272 709.500h4.500l1 1.500h6.500v8h-12z" fill={W} />
          <path d="M1300.600 710.600h8.800v8.800h-4.500l-4.300-4.300z" stroke={W} strokeWidth="1.300" /><path d="M1300 714.500h5v5z" fill={W} />
          <path d="M1326 711h11M1327.500 711.500v8h8v-8M1330 713v5M1331.500 713v5M1333 713v5M1330 710.500v-1h3v1" stroke={W} strokeWidth="1.100" />
        </Svg>
      </div>
    </div>
  );
}

/* ---------- taskbar ---------- */

function Task({ className, on, children }: { className: string; on?: boolean; children: React.ReactNode }) {
  return (
    <div className={`flex h-full shrink-0 flex-col items-center ${className}`}>
      <div className="flex min-h-0 flex-1 items-center">{children}</div>
      <div className={`h-[2px] w-full ${on ? "bg-[#cf7a28]" : ""}`} />
    </div>
  );
}

function Taskbar() {
  return (
    <div className="flex h-[40px] shrink-0 bg-[linear-gradient(to_right,#e2dcdc_0,#e2d5d5_70px,#dfd6d6_200px,#dedcde_290px,#e0dfe1_400px,#e5dad8_470px,#e1d6d5_620px,#dddcdf_800px,#dce0e5_1090px,#e5dcdc_1145px,#e6dad3_1220px,#e9dacb_1366px)] text-[12px] text-[#111]">
      <Task className="w-[48px]">
        <Svg w={16} h={16} className="mt-[1px]"><path d="M0 2.300 6.500 1.400v6.100H0zM7.500 1.200 16 0v7.500H7.500zM0 8.500h6.500v6.100L0 13.700zM7.500 8.500H16V16l-8.500-1.200z" fill="#000" /></Svg>
      </Task>
      <Task className="w-[48px]">
        <Svg w={16} h={16}><path d="M1 .500v3h9.500v-3M1 15.500v-3h9.500v3M1 5.500h9.500v5H1zM14.500 0v3M14.500 9v6.500" stroke="#111" strokeWidth="1.300" /><path d="M13 4.500h3v3h-3z" fill="#111" /></Svg>
      </Task>
      <Task className="w-[53px]">
        <Svg w={23} h={24}><path d="M7.500 6V4q0-2.500 2-2.500h4q2 0 2 2.500v2M9.500 3.500Q11.500-1 14 1.500q2 1.500 1.500 3.500" stroke="#111" strokeWidth="1.100" /><path d="M0 6.500h23V22q0 1.500-1.500 1.500h-20Q0 23.500 0 22z" fill="#000" /><path d="M6 9h5.200v5.200H6z" fill="#f25022" /><path d="M12 9h5.200v5.200H12z" fill="#7fba00" /><path d="M6 15h5.200v5.200H6z" fill="#00a4ef" /><path d="M12 15h5.200v5.200H12z" fill="#ffb900" /></Svg>
      </Task>
      <Task className="ml-[3px] w-[40px]" on>
        <Svg w={22} h={19}><path d="M0 1q0-1 1-1h7l2 2H0z" fill="#e5a520" /><path d="M0 2h20.500q1 0 1 1v12.500q0 1-1 1H1q-1 0-1-1z" fill="#ffd766" /><path d="M0 2.500h21.500V5H8L6.500 6.500H0z" fill="#f5c34a" /><path d="M3.500 10q0-1 1-1H17q1 0 1 1v9h-4v-4.500H8V19H3.500z" fill="#3f93d2" /></Svg>
      </Task>
      <Task className="w-[58px]">
        <Svg w={20} h={23}><path d="M3 16h14l2.500 5q.5 2-1 2h-17q-1.500 0-1-2z" fill="#f28100" /><path d="M9 .5h2.500L16.500 18q-6.500 3-12.500 0z" fill="#f0f0f0" /><path d="m8.700 1-1 4q2.500 1 5 0l-1-4.200q-1.500-.8-3 .2zM6.500 9.500l-1.300 4.700q5 2 9.900 0L13.800 9.500q-3.600 1.500-7.300 0z" fill="#f28100" /></Svg>
      </Task>
      <Task className="w-[40px]" on>
        <Svg w={20} h={24}><path d="M5 0h10l2 2.200L18.700 2l1.300 3-.7 2.500.7 2.500-3 9.500q-3 3-7 4.500-4-1.500-7-4.500L0 10l.7-2.500L0 5l1.300-3L3 2.200z" fill="#f7431a" /><path d="m10 3.500 5-.7 2.500 3.700-2 4 1 2-3.500 3.500 1 1.500-4 3-4-3 1-1.500-3.500-3.500 1-2-2-4L5 2.800z" fill="#fff" /><path d="m5 7.500 3.500 1L7.500 11zM15 7.500l-3.500 1 1 2.500zM10 8.500v5l-2 2 2 1.200 2-1.200-2-2M6.500 13l2 1.500M13.500 13l-2 1.500" fill="#f7431a" stroke="#f7431a" strokeWidth=".7" /></Svg>
      </Task>
      <Task className="ml-[9px] w-[40px]" on>
        <Svg w={24} h={24}>
          <path d="M0 14.500 17.500 0v6.800L2.500 17.500z" fill="#1474b8" />
          <path d="M0 9.500 2.500 7l15 10.200V24z" fill="#1b86cf" />
          <path d="M17.500 0 24 3v18l-6.500 3z" fill="#2ba0ee" />
        </Svg>
      </Task>
      <Task className="ml-[5px] w-[48px] bg-[#fafafa]" on>
        <div className="flex h-[22px] w-[22px] items-center justify-center border-2 border-[#16c1f3] bg-[#001e2b] text-[11px] font-semibold leading-none text-[#16c1f3]">Ps</div>
      </Task>
      <div className="flex-1" />
      <Svg w={90} h={18} className="mt-[11px]" vb="1116 739 90 18">
        <path d="m1117.500 751.500 5.500-5.500 5.500 5.500" stroke="#111" strokeWidth="1.400" />
        <path d="M1144.500 744.500h9.500v7h-9.500M1154 746.500h1.500v3h-1.500" stroke="#111" strokeWidth="1.100" /><path d="M1146 746h7v4h-7z" fill="#111" /><path d="M1140 741v3M1143 741v3M1139 744h5v3l-1.500 1.500h-2L1139 747zM1141.500 748v4h2" fill="#111" stroke="#111" strokeWidth=".8" />
        <path d="M1164 744h1.500l1.500 2.500h4l-2.500-6h2l4.500 6h2.500q2 0 2 1.500t-2 1.500h-2.500l-4.500 6h-2l2.500-6h-4l-1.500 2.500h-1.500l.8-4z" stroke="#111" strokeWidth="1.200" />
        <path d="M1187.500 745.500h2.500l3.500-3.500v12l-3.500-3.500h-2.500zM1195.500 745.500q1.500 2.500 0 5" stroke="#111" strokeWidth="1.100" /><path d="M1198 743.500q3 4.500 0 9M1200.500 741.500q4 6.500 0 13" stroke="#999" strokeWidth="1.100" />
      </Svg>
      <div className="ml-[7px] flex w-[28px] items-center whitespace-nowrap tracking-[-0.6px]">ENG</div>
      <div className="ml-[6px] flex w-[62px] flex-col items-center whitespace-nowrap pt-[2px] leading-[18px] tracking-[-0.5px]">
        <span>21:08</span>
        <span>18-01-2020</span>
      </div>
      <Svg w={17} h={17} className="ml-[16px] mt-[12px]"><path d="M.7.700h15v12h-5l-2.500 2.800-2.500-2.800h-5z" stroke="#111" strokeWidth="1.300" /></Svg>
      <div className="ml-[20px] mr-[3px] h-full w-px bg-[#c9b9ac]" />
    </div>
  );
}

export default function App() {
  return (
    <div className="flex h-[768px] w-[1366px] flex-col overflow-hidden bg-[#424242] font-['Open_Sans','Noto_Sans',sans-serif]">
      <MenuBar />
      <OptionsBar />
      <div className="flex h-[665px] shrink-0">
        <ToolColumn />
        <DocumentArea />
        <div className="w-px shrink-0 bg-[#535353]" />
        <div className="flex h-full flex-1 border-l border-[#383838]">
          <IconStrip />
          <div className="ml-[1px] flex h-full w-[237px] shrink-0 flex-col border-x border-[#383838]">
            <div className="flex h-[12px] shrink-0 items-center justify-end border-b border-[#383838] pr-[6px]">
              <Svg w={7} h={5}><path d="m0 0 3 2.500L0 5M4 0l3 2.500L4 5" stroke="#ccc" strokeWidth="1.300" /></Svg>
            </div>
            <ColorPanel />
            <div className="h-px shrink-0 bg-[#4a4a4a]" />
            <LayersPanel />
          </div>
        </div>
      </div>
      <Taskbar />
    </div>
  );
}
